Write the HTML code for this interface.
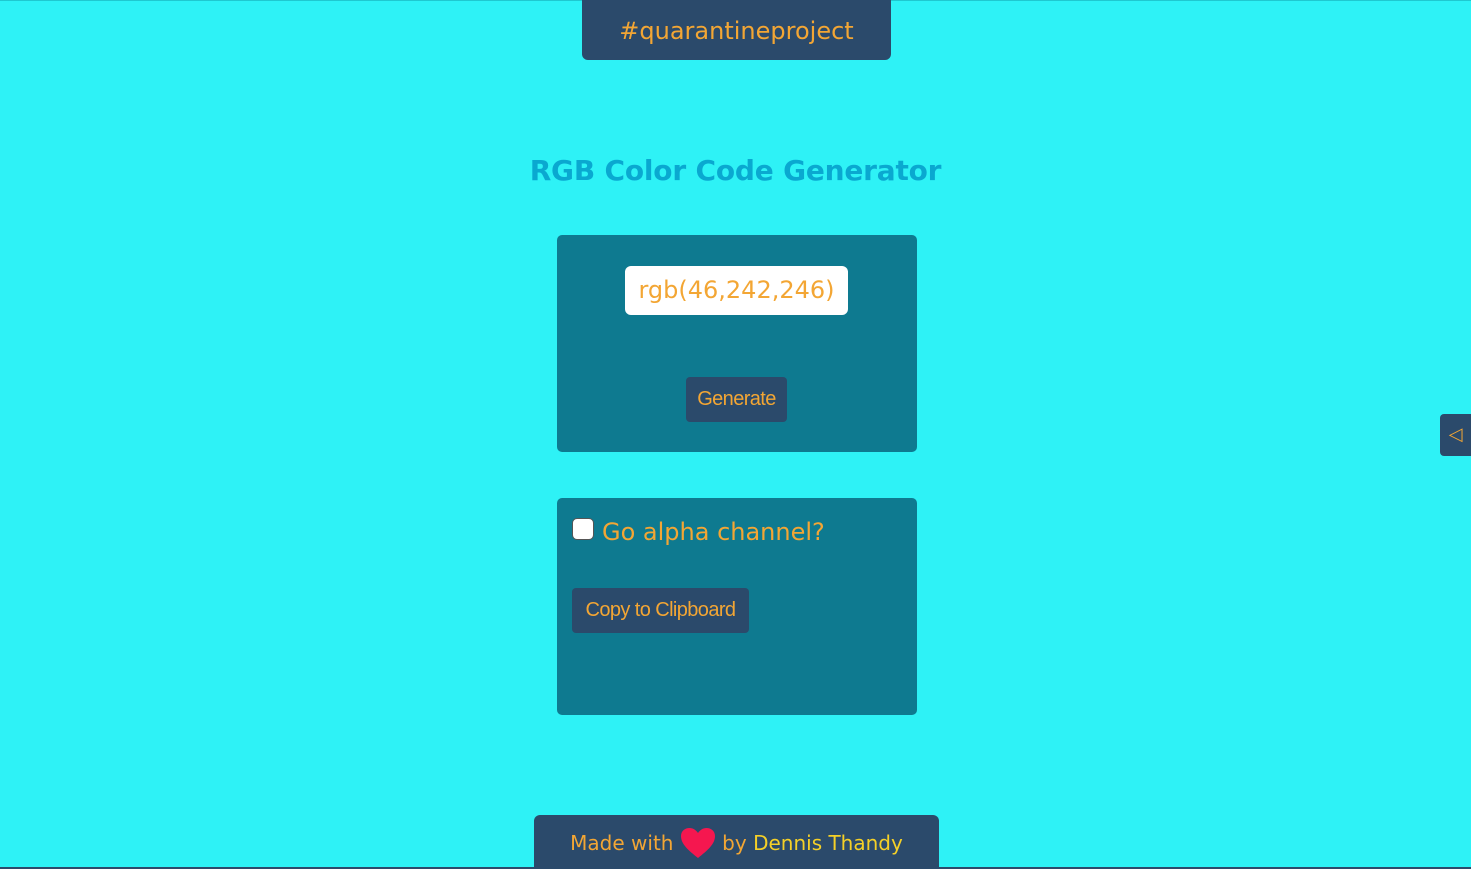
<!DOCTYPE html>
<html style="overflow:hidden;height:869px"><head><meta charset="utf-8"><style>
*{box-sizing:border-box;margin:0;padding:0}
body{width:1471px;height:869px;background:#2ef2f6;font-family:"DejaVu Sans","Liberation Sans",sans-serif;position:relative;overflow:hidden}
.tl{position:absolute;left:0;top:0;width:1471px;height:1px;background:#1fc8d0}
.top{position:absolute;left:582px;top:0;width:309px;height:60px;background:#2b4a6b;border-radius:0 0 6px 6px;color:#f3a634;font-size:24px;text-align:center;line-height:62px}
h1{position:absolute;left:0;width:1471px;top:154px;text-align:center;color:#0aa8d0;font-size:28px;font-weight:bold;letter-spacing:-0.2px}
.panel{position:absolute;left:557px;width:360px;background:#0e7a90;border-radius:5px}
.code{position:absolute;left:68px;top:31px;width:223px;height:49px;background:#fff;border-radius:6px;color:#f3a634;font-size:24px;text-align:center;line-height:49px}
.btn{position:absolute;background:#2b4a6b;color:#f3a634;border-radius:4px;font-family:"Liberation Sans",sans-serif;font-size:20px;text-align:center;line-height:45px;height:45px;letter-spacing:-0.6px}
.cb{position:absolute;left:15px;top:20px;width:22px;height:22px;background:#fff;border-radius:5px;border:1px solid #555}
.lab{position:absolute;left:45px;top:20px;color:#f3a634;font-size:24px}
.side{position:absolute;left:1440px;top:414px;width:31px;height:42px;background:#2b4a6b;border-radius:4px 0 0 4px;color:#f3a634;font-size:18px;text-align:center;line-height:42px}
.foot{position:absolute;left:534px;top:815px;width:405px;height:54px;background:#2b4a6b;border-radius:6px 6px 0 0;color:#f3a634;font-size:20px;line-height:56px;text-align:center}
.foot span.n{color:#f5d027}
.line{position:absolute;left:0;top:867px;width:1471px;height:2px;background:#2b4a6b}
</style></head><body>
<div class="tl"></div>
<div class="top">#quarantineproject</div>
<h1>RGB Color Code Generator</h1>
<div class="panel" style="top:235px;height:217px">
<div class="code">rgb(46,242,246)</div>
<div class="btn" style="left:129px;top:142px;width:101px">Generate</div>
</div>
<div class="panel" style="top:498px;height:217px">
<div class="cb"></div><div class="lab">Go alpha channel?</div>
<div class="btn" style="left:15px;top:90px;width:177px">Copy to Clipboard</div>
</div>
<div class="side">◁</div>
<div class="line"></div>
<div class="foot">Made with <svg width="36" height="32" viewBox="0 0 36 32" style="vertical-align:-9px"><path d="M18 31 C8 23 1 17 1 9 C1 4 5 1 9.5 1 C13 1 16 3 18 6 C20 3 23 1 26.5 1 C31 1 35 4 35 9 C35 17 28 23 18 31Z" fill="#f5174f"/></svg> by <span class="n">Dennis Thandy</span></div>
</body></html>
